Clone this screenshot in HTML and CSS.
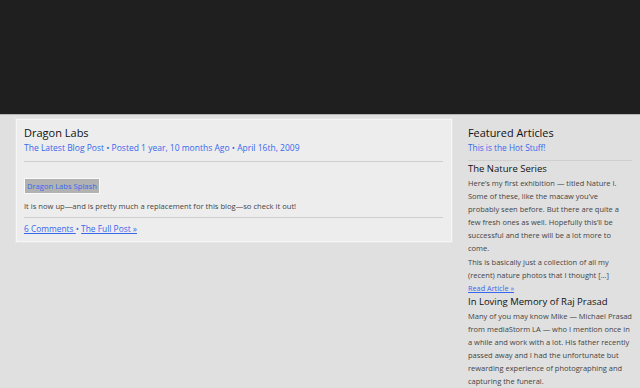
FILE: index.html
```html
<!DOCTYPE html>
<html>
<head>
  <title>Dragon Labs</title>
  <meta name="viewport" content="width=device-width, initial-scale=1.0">
  <link rel="stylesheet" href="styles.css">
</head>
<body>
  <div class="header"></div>

  <div class="page">
    <div class="main">
      <div class="post">
        <h2 class="post-title">Dragon Labs</h2>
        <div class="post-meta">The Latest Blog Post &bull; Posted 1 year, 10 months Ago &bull; April 16th, 2009</div>
        <div class="post-body">
          <a class="splash" href="#">Dragon Labs Splash</a>
          <p>It is now up&mdash;and is pretty much a replacement for this blog&mdash;so check it out!</p>
        </div>
        <div class="post-links">
          <a href="#">6 Comments </a> &bull; <a href="#">The Full Post &raquo;</a>
        </div>
      </div>
    </div>

    <div class="sidebar">
      <h2 class="side-title">Featured Articles</h2>
      <div class="side-sub">This is the Hot Stuff!</div>

      <div class="article">
        <h3>The Nature Series</h3>
        <p>Here&rsquo;s my first exhibition &mdash; titled Nature I.<br>
        Some of these, like the macaw you&rsquo;ve<br>
        probably seen before. But there are quite a<br>
        few fresh ones as well. Hopefully this&rsquo;ll be<br>
        successful and there will be a lot more to<br>
        come.</p>
        <p>This is basically just a collection of all my<br>
        (recent) nature photos that I thought [...]</p>
        <a class="read-more" href="#">Read Article &raquo;</a>
      </div>

      <div class="article">
        <h3>In Loving Memory of Raj Prasad</h3>
        <p>Many of you may know Mike &mdash; Michael Prasad<br>
        from mediaStorm LA &mdash; who I mention once in<br>
        a while and work with a lot. His father recently<br>
        passed away and I had the unfortunate but<br>
        rewarding experience of photographing and<br>
        capturing the funeral.</p>
      </div>
    </div>
  </div>
</body>
</html>
```

FILE: styles.css
```css
body {
  margin: 0;
  font-family: "Open Sans", "DejaVu Sans", sans-serif;
  background-color: #e0e0e0;
  color: #444;
}

a {
  color: #3868ee;
}

.header {
  height: 114px;
  background-color: #1f1f1f;
  border-bottom: 1px solid #b4b4b4;
}

.page {
  display: flex;
  gap: 16px;
  padding: 4px 0 0 16px;
}

.main {
  width: 436px;
  flex-shrink: 0;
}

.post {
  background-color: #ededed;
  border: 1px solid #f6f6f6;
  box-shadow: 0 0 0 1px #e6e6e6;
  padding: 5px 8px 5px 7px;
}

.post-title {
  margin: 0;
  font-size: 11px;
  font-weight: normal;
  color: #111;
  line-height: 16px;
}

.post-meta {
  color: #3868ee;
  font-size: 8.5px;
  line-height: 14px;
  padding-bottom: 6px;
  border-bottom: 1px solid #cfcfcf;
}

.post-body {
  padding-top: 16px;
  border-bottom: 1px solid #cfcfcf;
}

.splash {
  display: block;
  width: max-content;
  background-color: #b2b2b2;
  border: 1px solid #fafafa;
  padding: 2px 2px;
  font-size: 7.6px;
  line-height: 10px;
  text-decoration: none;
}

.post-body p {
  margin: 6px 0 5px;
  font-size: 7.6px;
  line-height: 12px;
}

.post-links {
  font-size: 8.4px;
  line-height: 14px;
  padding-top: 4px;
  color: #3868ee;
}

.sidebar {
  width: 164px;
  flex-shrink: 0;
}

.side-title {
  margin: 0;
  padding-top: 5px;
  font-size: 10.9px;
  font-weight: normal;
  color: #111;
  line-height: 17px;
}

.side-sub {
  color: #3868ee;
  font-size: 8.3px;
  line-height: 14px;
  padding: 0 0 5px;
  border-bottom: 1px solid #cfcfcf;
}

.article h3 {
  margin: 0;
  font-size: 9.5px;
  font-weight: normal;
  color: #111;
  line-height: 16px;
}

.article p {
  margin: 0;
  font-size: 7.5px;
  line-height: 13.1px;
  white-space: nowrap;
}

.read-more {
  display: block;
  font-size: 7.3px;
  line-height: 12px;
}
```
